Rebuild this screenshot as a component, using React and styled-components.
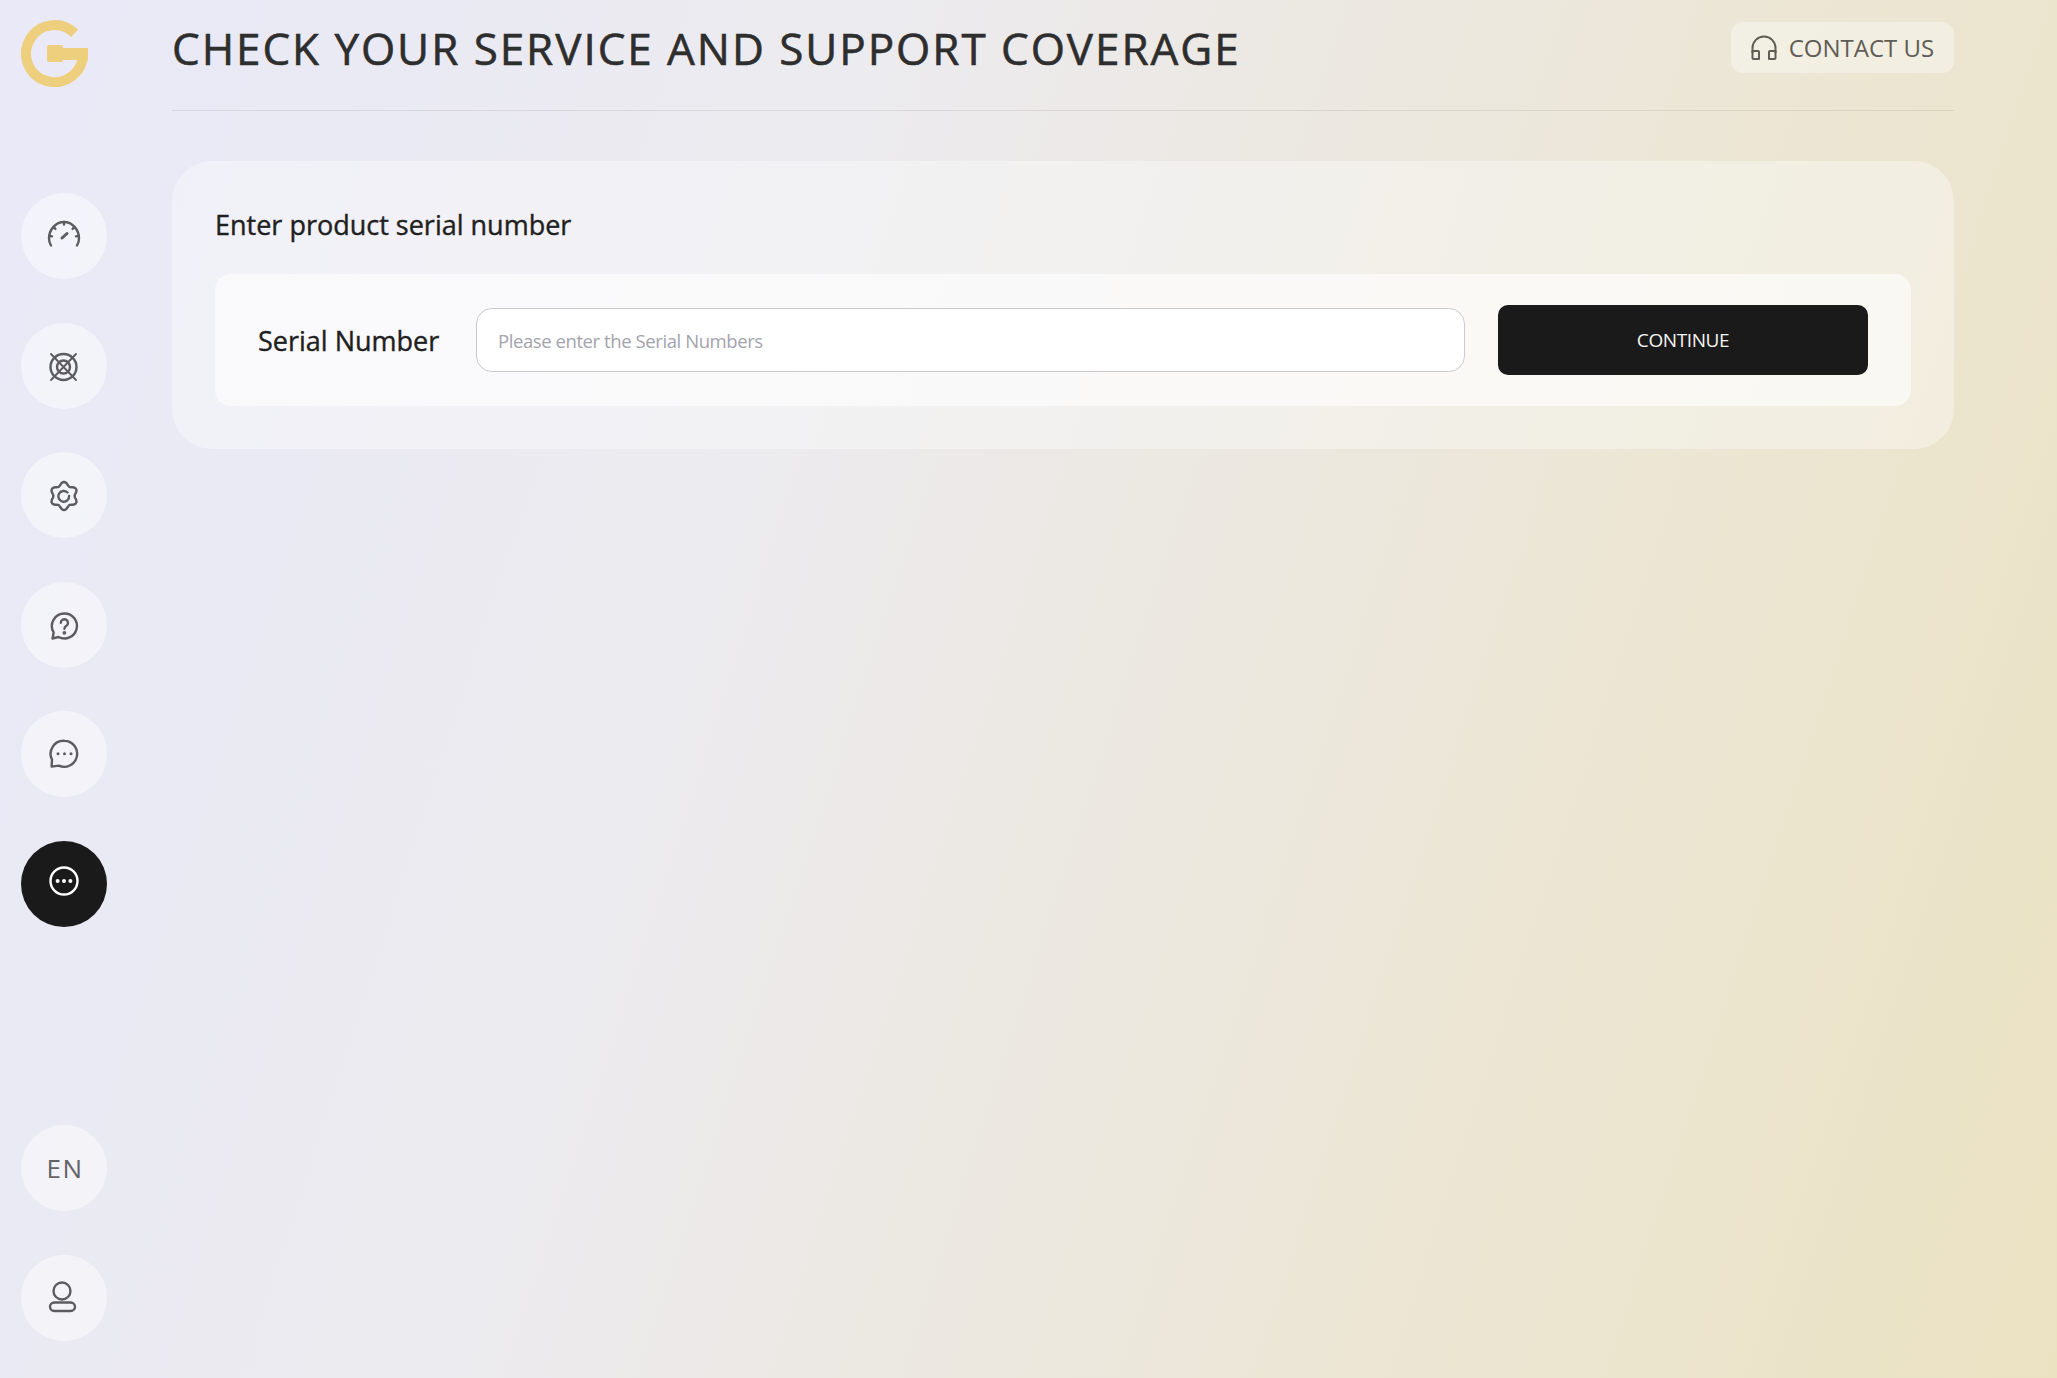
import React from 'react'
import styled, { createGlobalStyle } from 'styled-components'

const GlobalStyle = createGlobalStyle`
  html, body {
    margin: 0;
    padding: 0;
    height: 100%;
  }
  body {
    font-family: "Open Sans", "Noto Sans", sans-serif;
    color: #1a1a1a;
  }
  * {
    box-sizing: border-box;
  }
`

const Page = styled.div`
  width: 2057px;
  height: 1378px;
  display: flex;
  overflow: hidden;
  background: linear-gradient(108deg, #e9e9f8 0%, #ecebef 35%, #ece6d6 70%, #ebe2c2 100%);
`

const Sidebar = styled.aside`
  width: 172px;
  flex-shrink: 0;
  display: flex;
  flex-direction: column;
  padding: 20px 0 37px 21px;
`

const Logo = styled.svg`
  width: 67px;
  height: 67px;
  display: block;
`

const NavList = styled.nav`
  display: flex;
  flex-direction: column;
  gap: 43.6px;
  margin-top: 106px;
`

const BottomList = styled(NavList)`
  margin-top: auto;
`

const Circle = styled.div`
  width: 86px;
  height: 86px;
  border-radius: 50%;
  display: flex;
  align-items: center;
  justify-content: center;
  color: ${p => (p.$active ? '#ffffff' : '#5c5c60')};
  background: ${p => (p.$active ? '#1a1a1a' : 'rgba(255, 255, 255, 0.45)')};
`

const LangText = styled.span`
  font-size: 26px;
  letter-spacing: 1.5px;
  margin-left: 2px;
  color: #636367;
`

const Main = styled.main`
  flex: 1;
  padding: 0 103px 0 0;
  display: flex;
  flex-direction: column;
`

const Header = styled.header`
  height: 111px;
  padding-bottom: 15px;
  display: flex;
  align-items: center;
  justify-content: space-between;
  border-bottom: 1px solid rgba(90, 80, 60, 0.12);
`

const Title = styled.h1`
  margin: 0;
  font-size: 44px;
  font-weight: 400;
  letter-spacing: 1.95px;
  -webkit-text-stroke: 0.6px #2e2e2e;
  color: #2e2e2e;
`

const ContactButton = styled.button`
  width: 223px;
  height: 51px;
  border: none;
  border-radius: 12px;
  display: flex;
  align-items: center;
  justify-content: center;
  gap: 12px;
  font-family: inherit;
  font-size: 24px;
  color: #5f5d55;
  background: rgba(255, 255, 255, 0.35);
`

const Card = styled.section`
  margin-top: 50px;
  padding: 43px;
  height: 288px;
  border-radius: 40px;
  background: rgba(255, 255, 255, 0.35);
`

const CardTitle = styled.h2`
  margin: 0 0 28px;
  height: 42px;
  line-height: 42px;
  font-size: 27px;
  font-weight: 400;
  -webkit-text-stroke: 0.4px #1f1f1f;
  color: #1f1f1f;
`

const FormRow = styled.div`
  height: 132px;
  padding: 0 43px;
  display: flex;
  align-items: center;
  border-radius: 16px;
  background: rgba(255, 255, 255, 0.6);
`

const FieldLabel = styled.label`
  width: 218px;
  flex-shrink: 0;
  font-size: 27px;
  font-weight: 400;
  -webkit-text-stroke: 0.4px #1f1f1f;
  color: #1f1f1f;
`

const SerialInput = styled.input`
  flex: 1;
  height: 64px;
  padding: 0 21px;
  border: 1px solid #cbcbce;
  border-radius: 16px;
  outline: none;
  font-family: inherit;
  font-size: 18.5px;
  letter-spacing: -0.42px;
  background: #ffffff;
  &::placeholder {
    color: #a3a3ad;
    opacity: 1;
  }
`

const ContinueButton = styled.button`
  width: 370px;
  height: 70px;
  margin-left: 33px;
  flex-shrink: 0;
  border: none;
  border-radius: 10px;
  font-family: inherit;
  font-size: 19px;
  letter-spacing: -0.4px;
  color: #f4f4f4;
  background: #1a1a1a;
`

const Icon = ({ children, w = 32, h = 32, up = 0 }) => (
  <svg
    width={w}
    height={h}
    viewBox={`0 0 ${w} ${h}`}
    fill="none"
    stroke="currentColor"
    strokeWidth="2.4"
    strokeLinecap="round"
    strokeLinejoin="round"
    style={up ? { transform: `translateY(${up}px)` } : undefined}
  >
    {children}
  </svg>
)

// six soft lobes round the gear
const gearPath = (() => {
  const pts = []
  for (let i = 0; i < 72; i++) {
    const a = (i / 72) * Math.PI * 2
    const r = 12.3 + 1.7 * Math.cos(6 * a)
    pts.push(`${(16 + r * Math.sin(a)).toFixed(2)} ${(16 - r * Math.cos(a)).toFixed(2)}`)
  }
  return `M${pts.join('L')}Z`
})()

const GaugeIcon = () => (
  <Icon w={34} h={28} up={-3}>
    <path d="M4 26.5C2.8 24.5 2 21.8 2 19.5 2 10.5 8.8 3 17 3s15 7.5 15 16.5c0 2.3-.8 5-2 7" />
    <path d="M17 3v2.5M2.5 17l2.5.4M31.5 17l-2.5.4M6.8 8.3l1.6 1.6M27.2 8.3l-1.6 1.6" />
    <path d="M15 19l5-4.5" strokeWidth="3" />
  </Icon>
)

const TargetIcon = () => (
  <Icon w={32} h={32} up={1}>
    <circle cx="15.5" cy="16" r="13" />
    <circle cx="15.5" cy="16" r="6.5" />
    <path d="M3 3l25 26M28 3L3 29" strokeWidth="1.9" />
  </Icon>
)

const GearIcon = () => (
  <Icon w={32} h={32} up={1}>
    <path d={gearPath} />
    <path d="M19.5 12.5a5.4 5.4 0 1 0 1.6 3.5" />
  </Icon>
)

const HelpIcon = () => (
  <Icon w={32} h={32} up={1}>
    <path d="M16.5 3.5a12.5 12.5 0 1 1-6 23.5L4.5 28.5l1.2-6A12.5 12.5 0 0 1 16.5 3.5z" />
    <path d="M12.8 12.8a3.6 3.6 0 1 1 5.6 3c-1.4.8-2 1.4-2 3" />
    <circle cx="16.4" cy="22.8" r="0.7" fill="currentColor" />
  </Icon>
)

const ChatIcon = () => (
  <Icon w={32} h={32}>
    <path d="M16.5 2.8a13 13 0 1 1-5.8 24.8L3.6 28.6l.4-7A13 13 0 0 1 16.5 2.8z" />
    <circle cx="10" cy="15.8" r="1.5" fill="currentColor" stroke="none" />
    <circle cx="16.5" cy="15.8" r="1.5" fill="currentColor" stroke="none" />
    <circle cx="23" cy="15.8" r="1.5" fill="currentColor" stroke="none" />
  </Icon>
)

const MoreIcon = () => (
  <Icon w={32} h={32} up={-3}>
    <circle cx="16" cy="16" r="13.5" />
    <circle cx="9.6" cy="16" r="2" fill="currentColor" stroke="none" />
    <circle cx="16" cy="16" r="2" fill="currentColor" stroke="none" />
    <circle cx="22.4" cy="16" r="2" fill="currentColor" stroke="none" />
  </Icon>
)

const UserIcon = () => (
  <Icon w={32} h={34} up={-1}>
    <circle cx="14" cy="11" r="8.5" />
    <rect x="2" y="22.5" width="25" height="8.5" rx="4.25" />
  </Icon>
)

const HeadsetIcon = () => (
  <svg width="26" height="26" viewBox="0 0 26 26" fill="none" stroke="currentColor" strokeWidth="2" strokeLinejoin="round">
    <path d="M1.5 18V13a11.5 11.5 0 0 1 23 0v5" />
    <path d="M1.5 16h5.5a1 1 0 0 1 1 1v7H2.5a1 1 0 0 1-1-1zM24.5 16H19a1 1 0 0 0-1 1v7h5.5a1 1 0 0 0 1-1z" />
  </svg>
)

const navItems = [
  { id: 'dashboard', icon: <GaugeIcon /> },
  { id: 'target', icon: <TargetIcon /> },
  { id: 'settings', icon: <GearIcon /> },
  { id: 'help', icon: <HelpIcon /> },
  { id: 'chat', icon: <ChatIcon /> },
  { id: 'more', icon: <MoreIcon />, active: true },
]

const App = () => (
  <Page>
    <GlobalStyle />
    <Sidebar>
      <Logo viewBox="0 0 67 67" fill="none">
        <path d="M53.6 13.4A28.5 28.5 0 1 0 62 33.5" stroke="#edcf7e" strokeWidth="10" />
        <rect x="26" y="28" width="41" height="12" fill="#edcf7e" />
        <rect x="26" y="25" width="16" height="17" rx="2" fill="#edcf7e" />
      </Logo>
      <NavList>
        {navItems.map(item => (
          <Circle key={item.id} $active={item.active}>
            {item.icon}
          </Circle>
        ))}
      </NavList>
      <BottomList>
        <Circle>
          <LangText>EN</LangText>
        </Circle>
        <Circle>
          <UserIcon />
        </Circle>
      </BottomList>
    </Sidebar>
    <Main>
      <Header>
        <Title>CHECK YOUR SERVICE AND SUPPORT COVERAGE</Title>
        <ContactButton>
          <HeadsetIcon />
          CONTACT US
        </ContactButton>
      </Header>
      <Card>
        <CardTitle>Enter product serial number</CardTitle>
        <FormRow>
          <FieldLabel>Serial Number</FieldLabel>
          <SerialInput placeholder="Please enter the Serial Numbers" />
          <ContinueButton>CONTINUE</ContinueButton>
        </FormRow>
      </Card>
    </Main>
  </Page>
)

export default App
